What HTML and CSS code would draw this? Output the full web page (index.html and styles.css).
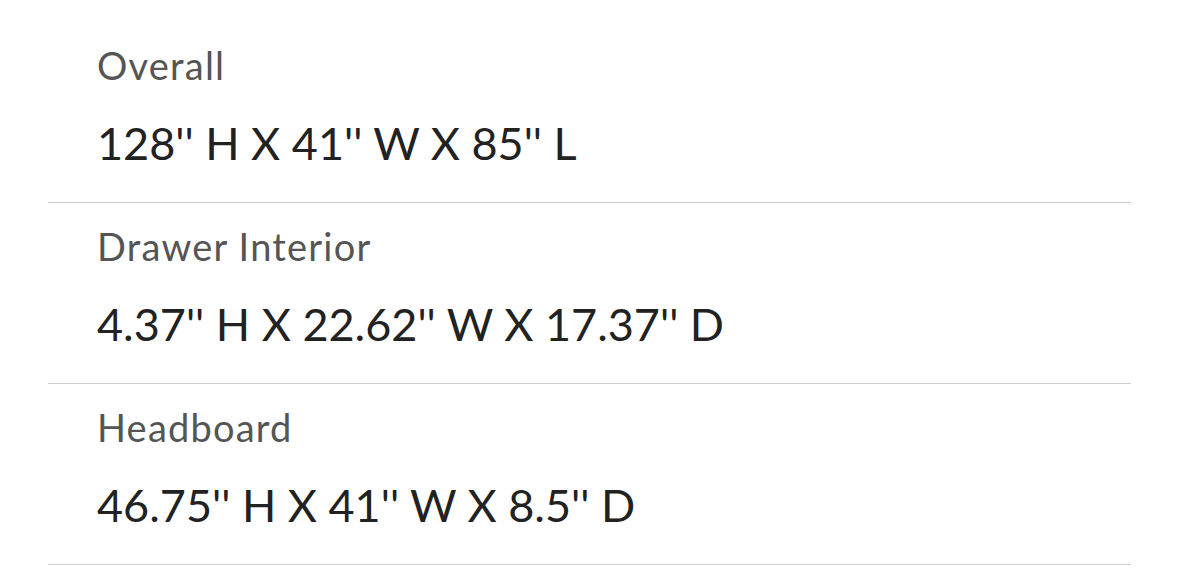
FILE: index.html
```html
<!DOCTYPE html>
<html lang="en">
<head>
    <meta charset="UTF-8">
    <meta name="viewport" content="width=device-width, initial-scale=1.0">
    <title>Dimensions</title>
    <link rel="stylesheet" href="styles.css">
</head>
<body>
<div class="dimensions">
    <div class="dim-row">
        <div class="dim-label">Overall</div>
        <div class="dim-value">128'' H X 41'' W X 85'' L</div>
    </div>
    <div class="dim-row">
        <div class="dim-label">Drawer Interior</div>
        <div class="dim-value">4.37'' H X 22.62'' W X 17.37'' D</div>
    </div>
    <div class="dim-row">
        <div class="dim-label">Headboard</div>
        <div class="dim-value">46.75'' H X 41'' W X 8.5'' D</div>
    </div>
</div>
</body>
</html>
```

FILE: styles.css
```css
body {
    margin: 0;
    padding: 0;
    background-color: #fff;
    font-family: Lato, "Liberation Sans", sans-serif;
}
.dimensions {
    width: 1083px;
    margin-left: 48px;
    padding-top: 22px;
}
.dim-row {
    display: flex;
    flex-direction: column;
    gap: 33px;
    padding: 23px 0 34px 49px;
    border-bottom: 1px solid #cccccc;
}
.dim-label {
    font-size: 38px;
    line-height: 40px;
    letter-spacing: 1.2px;
    color: #555555;
}
.dim-value {
    font-size: 45px;
    line-height: 50px;
    color: #222222;
}
```
